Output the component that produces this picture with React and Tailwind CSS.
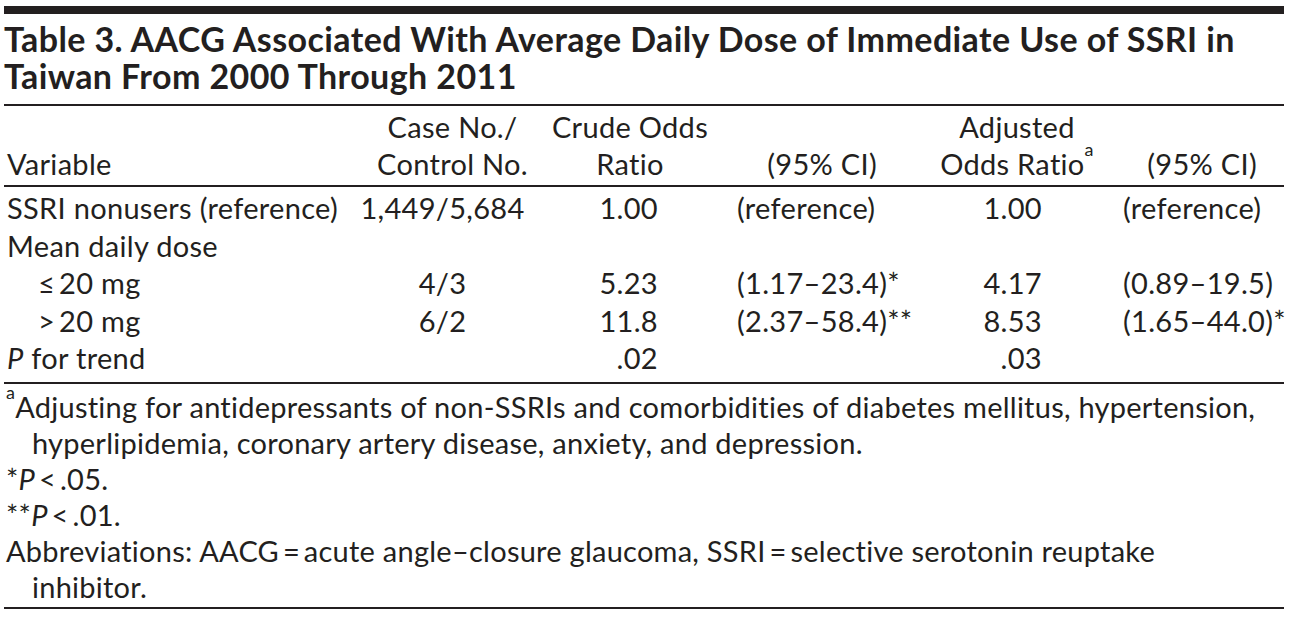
import React from 'react';

const grid = 'grid grid-cols-[341px_195px_180px_180px_210px_174px]';

const rows = [
  { label: 'SSRI nonusers (reference)', cases: '1,449/5,684', crude: '1.00', ci1: '(reference)', adj: '1.00', ci2: '(reference)' },
  { label: 'Mean daily dose' },
  { label: '≤\u200920 mg', sub: true, cases: '4/3', crude: '5.23', ci1: '(1.17–23.4)*', adj: '4.17', ci2: '(0.89–19.5)' },
  { label: '>\u200920 mg', sub: true, cases: '6/2', crude: '11.8', ci1: '(2.37–58.4)**', adj: '8.53', ci2: '(1.65–44.0)*' },
  { label: <><i>P</i> for trend</>, crude: '.02', adj: '.03' },
];

function Rule({ className = '' }) {
  return <div className={`h-[2px] bg-[#231f20] ${className}`} />;
}

export default function App() {
  return (
    <div className="w-[1289px] h-[618px] bg-white overflow-hidden text-[#231f20] font-['Lato',sans-serif] pl-[4px] pr-[5px] pt-[6px]">
      <div className="h-[8px] bg-[#231f20]" />

      <h1 className="mt-[6px] text-[34px] leading-[37px] font-bold tracking-[0.4px] whitespace-nowrap">
        <div>Table 3. AACG Associated With Average Daily Dose of Immediate Use of SSRI in</div>
        <div>Taiwan From 2000 Through 2011</div>
      </h1>
      <Rule className="mt-[10px]" />

      {/* header */}
      <div className={`${grid} items-end text-[29px] leading-[37px] tracking-[0.3px] mt-[2px]`}>
        <div className="pl-[3px]">Variable</div>
        <div className="pl-[20px] text-center">Case No./<br />Control No.</div>
        <div className="text-center">Crude Odds<br />Ratio</div>
        <div className="text-right pr-[23px]">(95% CI)</div>
        <div className="pl-[24px] text-center">Adjusted<br />Odds Ratio<sup className="text-[18px] align-[10px]">a</sup></div>
        <div className="text-right pr-[27px]">(95% CI)</div>
      </div>
      <Rule className="mt-[3px]" />

      {/* body */}
      <div className="text-[29px] leading-[37.5px] tracking-[0.3px] mt-[2px]">
        {rows.map((r, i) => (
          <div key={i} className={grid}>
            <div className={r.sub ? 'pl-[34px]' : 'pl-[3px]'}>{r.label}</div>
            <div className="text-center">{r.cases}</div>
            <div className="text-right pr-[62px]">{r.crude}</div>
            <div className="pl-[17px] whitespace-nowrap">{r.ci1}</div>
            <div className="text-right pr-[68px]">{r.adj}</div>
            <div className="pl-[13px] whitespace-nowrap">{r.ci2}</div>
          </div>
        ))}
      </div>
      <Rule className="mt-[5px]" />

      {/* footnotes */}
      <div className="text-[29px] leading-[36px] tracking-[0.25px] mt-[5px] pl-[28px] -indent-[26px]">
        <p className="whitespace-nowrap"><sup className="text-[18px] align-[10px]">a</sup>Adjusting for antidepressants of non-SSRIs and comorbidities of diabetes mellitus, hypertension,<br />hyperlipidemia, coronary artery disease, anxiety, and depression.</p>
        <p>*<i>P</i>{'\u2009<\u2009'}.05.</p>
        <p>**<i>P</i>{'\u2009<\u2009'}.01.</p>
        <p className="whitespace-nowrap">Abbreviations: AACG{'\u2009=\u2009'}acute angle–closure glaucoma, SSRI{'\u2009=\u2009'}selective serotonin reuptake<br />inhibitor.</p>
      </div>
      <Rule className="mt-[2px]" />
    </div>
  );
}
